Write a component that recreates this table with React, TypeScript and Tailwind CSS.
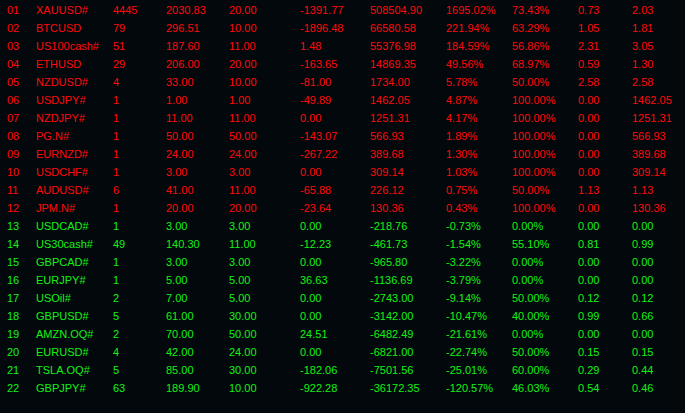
const ROWS: string[][] = [
  ['01', 'XAUUSD#', '4445', '2030.83', '20.00', '-1391.77', '508504.90', '1695.02%', '73.43%', '0.73', '2.03'],
  ['02', 'BTCUSD', '79', '296.51', '10.00', '-1896.48', '66580.58', '221.94%', '63.29%', '1.05', '1.81'],
  ['03', 'US100cash#', '51', '187.60', '11.00', '1.48', '55376.98', '184.59%', '56.86%', '2.31', '3.05'],
  ['04', 'ETHUSD', '29', '206.00', '20.00', '-163.65', '14869.35', '49.56%', '68.97%', '0.59', '1.30'],
  ['05', 'NZDUSD#', '4', '33.00', '10.00', '-81.00', '1734.00', '5.78%', '50.00%', '2.58', '2.58'],
  ['06', 'USDJPY#', '1', '1.00', '1.00', '-49.89', '1462.05', '4.87%', '100.00%', '0.00', '1462.05'],
  ['07', 'NZDJPY#', '1', '11.00', '11.00', '0.00', '1251.31', '4.17%', '100.00%', '0.00', '1251.31'],
  ['08', 'PG.N#', '1', '50.00', '50.00', '-143.07', '566.93', '1.89%', '100.00%', '0.00', '566.93'],
  ['09', 'EURNZD#', '1', '24.00', '24.00', '-267.22', '389.68', '1.30%', '100.00%', '0.00', '389.68'],
  ['10', 'USDCHF#', '1', '3.00', '3.00', '0.00', '309.14', '1.03%', '100.00%', '0.00', '309.14'],
  ['11', 'AUDUSD#', '6', '41.00', '11.00', '-65.88', '226.12', '0.75%', '50.00%', '1.13', '1.13'],
  ['12', 'JPM.N#', '1', '20.00', '20.00', '-23.64', '130.36', '0.43%', '100.00%', '0.00', '130.36'],
  ['13', 'USDCAD#', '1', '3.00', '3.00', '0.00', '-218.76', '-0.73%', '0.00%', '0.00', '0.00'],
  ['14', 'US30cash#', '49', '140.30', '11.00', '-12.23', '-461.73', '-1.54%', '55.10%', '0.81', '0.99'],
  ['15', 'GBPCAD#', '1', '3.00', '3.00', '0.00', '-965.80', '-3.22%', '0.00%', '0.00', '0.00'],
  ['16', 'EURJPY#', '1', '5.00', '5.00', '36.63', '-1136.69', '-3.79%', '0.00%', '0.00', '0.00'],
  ['17', 'USOil#', '2', '7.00', '5.00', '0.00', '-2743.00', '-9.14%', '50.00%', '0.12', '0.12'],
  ['18', 'GBPUSD#', '5', '61.00', '30.00', '0.00', '-3142.00', '-10.47%', '40.00%', '0.99', '0.66'],
  ['19', 'AMZN.OQ#', '2', '70.00', '50.00', '24.51', '-6482.49', '-21.61%', '0.00%', '0.00', '0.00'],
  ['20', 'EURUSD#', '4', '42.00', '24.00', '0.00', '-6821.00', '-22.74%', '50.00%', '0.15', '0.15'],
  ['21', 'TSLA.OQ#', '5', '85.00', '30.00', '-182.06', '-7501.56', '-25.01%', '60.00%', '0.29', '0.44'],
  ['22', 'GBPJPY#', '63', '189.90', '10.00', '-922.28', '-36172.35', '-120.57%', '46.03%', '0.54', '0.46'],
];

export default function App() {
  return (
    <div className="w-[685px] h-[413px] bg-[#02080c] overflow-hidden pt-[1px] pl-[7px] text-[11px] font-['Liberation_Sans',Arial,sans-serif]">
      {ROWS.map(row => {
        const up = !row[6].startsWith('-');
        return (
          <div
            key={row[0]}
            className={`grid grid-cols-[29px_77px_53px_63px_71px_70px_76px_66px_66px_54px_1fr] h-[18px] items-center leading-none ${up ? 'text-[#ff0a0a]' : 'text-[#14f014]'}`}
          >
            {row.map((cell, i) => (
              <span key={i} className="whitespace-nowrap">{cell}</span>
            ))}
          </div>
        );
      })}
    </div>
  );
}
